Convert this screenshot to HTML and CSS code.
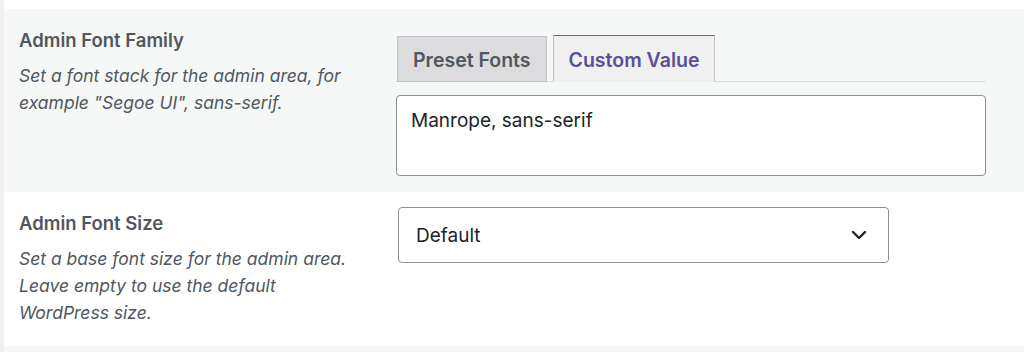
FILE: index.html
```html
<!DOCTYPE html>
<html lang="en">
<head>
<meta charset="utf-8">
<title>Admin Font Settings</title>
<link rel="stylesheet" href="styles.css">
</head>
<body>
<div class="wrap">
  <div class="row alt">
    <div class="th">
      <div class="label">Admin Font Family</div>
      <p class="desc">Set a font stack for the admin area, for example "Segoe UI", sans-serif.</p>
    </div>
    <div class="td td-tabs">
      <div class="tabbar">
        <div class="tab">Preset Fonts</div>
        <div class="tab active">Custom Value</div>
      </div>
      <div class="textarea">Manrope, sans-serif</div>
    </div>
  </div>
  <div class="row">
    <div class="th">
      <div class="label">Admin Font Size</div>
      <p class="desc">Set a base font size for the admin area. Leave empty to use the default WordPress size.</p>
    </div>
    <div class="td">
      <div class="select">
        <span>Default</span>
        <svg class="chev" width="16" height="10" viewBox="0 0 16 10"><path d="M2 2 L8 8 L14 2" fill="none" stroke="#1d2327" stroke-width="2.4" stroke-linecap="round" stroke-linejoin="round"/></svg>
      </div>
    </div>
  </div>
  <div class="row alt spacer"></div>
</div>
</body>
</html>
```

FILE: styles.css
```css
html, body {
  margin: 0;
  padding: 0;
  background: #f0f0f1;
  font-family: Inter, "Liberation Sans", sans-serif;
}
.wrap {
  margin-left: 4px;
  background: #fff;
  padding-top: 9px;
  height: 343px;
  overflow: hidden;
}
.row {
  display: grid;
  grid-template-columns: 377px 590px;
  padding-left: 15px;
}
.row.alt {
  background: #f6f7f7;
}
.row.spacer {
  height: 40px;
}
.th {
  padding: 19px 0 20px 0;
}
.label {
  font-size: 18.5px;
  line-height: 25px;
  font-weight: 600;
  color: #50575e;
}
.desc {
  margin: 9px 0 0 0;
  font-size: 17.5px;
  line-height: 27px;
  font-style: italic;
  color: #50575e;
  width: 345px;
}
.td {
  padding: 15px 0 16px 0;
}
.td-tabs {
  padding-top: 26px;
}
.tabbar {
  display: flex;
  align-items: flex-end;
  gap: 6px;
  border-bottom: 1px solid #dcdcde;
  height: 46px;
}
.tab {
  box-sizing: border-box;
  height: 46px;
  margin-bottom: -1px;
  margin-left: 1px;
  padding: 1px 15px 0 15px;
  display: flex;
  align-items: center;
  background: #dcdcde;
  border: 1px solid #c3c4c7;
  font-size: 19.5px;
  font-weight: 600;
  color: #50575e;
}
.tab.active {
  height: 47px;
  margin-left: 0;
  padding: 2px 15px 0 15px;
  background: #f0f0f1;
  border-top: 1px solid #6d5fa8;
  border-bottom: 1px solid #f0f0f1;
  color: #5b4f96;
}
.textarea {
  box-sizing: border-box;
  margin-top: 13px;
  height: 81px;
  background: #fff;
  border: 1px solid #8c8f94;
  border-radius: 4px;
  padding: 12px 14px;
  font-size: 19px;
  line-height: 26px;
  color: #1d2327;
}
.select {
  box-sizing: border-box;
  margin-left: 2px;
  width: 491px;
  height: 56px;
  background: #fff;
  border: 1px solid #8c8f94;
  border-radius: 4px;
  padding: 0 21px 0 17px;
  display: flex;
  align-items: center;
  justify-content: space-between;
  font-size: 19px;
  color: #1d2327;
}
.chev {
  display: block;
}
```
